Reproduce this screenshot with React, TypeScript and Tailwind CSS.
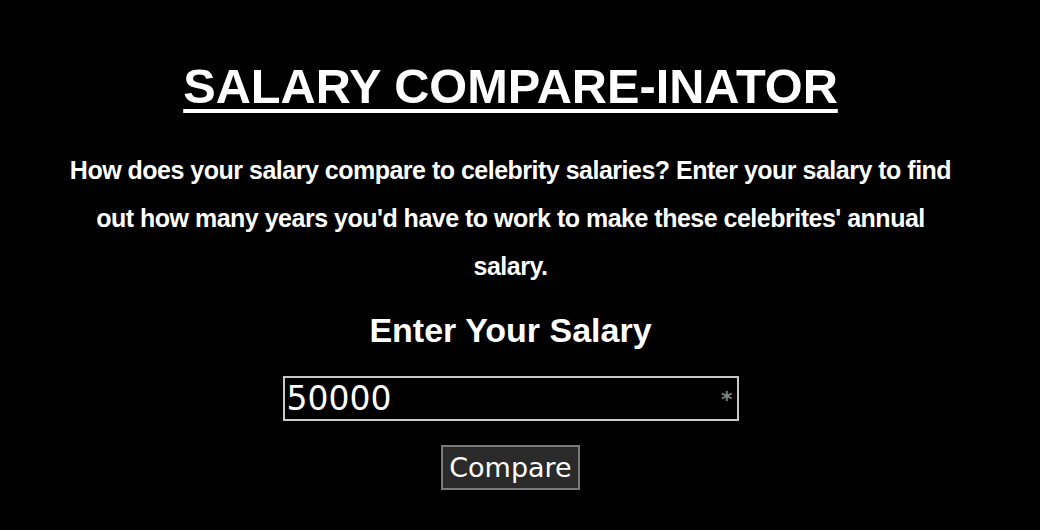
import React, { useState } from "react";

export default function App() {
  const [salary, setSalary] = useState("50000");

  return (
    <div className="min-h-[530px] w-full bg-black text-white font-['Liberation_Sans',Arial,sans-serif]">
      <div className="flex flex-col items-center pt-[56px] pr-[19px]">
        <h1 className="text-[48.7px] font-bold leading-[60px] underline decoration-[4px] underline-offset-[6px]">
          SALARY COMPARE-INATOR
        </h1>

        {/* Intro copy */}
        <p className="mt-[30px] w-[892px] text-center text-[25px] font-bold leading-[48px] tracking-[-0.5px]">
          How does your salary compare to celebrity salaries? Enter your salary to find out how many years you'd have to work to make these celebrites' annual salary.
        </p>

        <h2 className="mt-[20px] text-[34px] font-bold leading-[40px]">Enter Your Salary</h2>

        <div className="relative mt-[26px] w-[456px] h-[45px] border-2 border-[#c8c8c8] bg-black">
          <input
            value={salary}
            onChange={(e) => setSalary(e.target.value)}
            className="w-full h-full bg-transparent pl-[2px] pr-[24px] text-[33px] leading-none text-white outline-none font-['DejaVu_Sans',sans-serif]"
          />
          <span className="absolute right-[4px] top-[11px] text-[22px] font-bold leading-none text-[#808080] font-['DejaVu_Sans',sans-serif]">
            *
          </span>
        </div>

        <button className="mt-[24px] w-[139px] h-[45px] border-2 border-[#7a7a7a] bg-[#2a2a2a] text-[27px] leading-none text-white font-['DejaVu_Sans',sans-serif]">
          Compare
        </button>
      </div>
    </div>
  );
}
